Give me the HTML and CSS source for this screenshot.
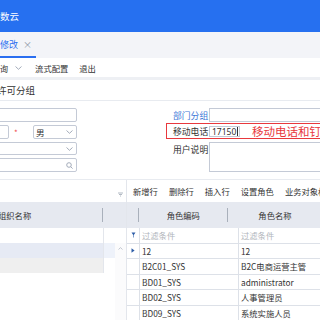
FILE: index.html
```html
<!DOCTYPE html>
<html lang="zh-CN">
  <head>
    <meta charset="utf-8">
    <title>用户修改</title>
    <link rel="stylesheet" href="styles.css">
  </head>
  <body>
    <div class="topbar"><span class="brand">数云</span></div>

    <div class="tabs">
      <div class="tab active">修改 <span class="close">×</span></div>
    </div>

    <div class="toolbar">
      <span class="tool first">查询</span>
      <svg class="chev" width="7" height="4" viewBox="0 0 7 4"><path d="M0.5 0.5 L3.5 3.3 L6.5 0.5" fill="none" stroke="#9aa3b2" stroke-width="0.9"/></svg>
      <span class="tool">流式配置</span>
      <span class="tool">退出</span>
    </div>

    <div class="section">许可分组</div>

    <div class="form">
      <div class="leftCol">
        <div class="field"></div>
        <div class="row2">
          <div class="field small"></div>
          <span class="req">*</span>
          <div class="field select">男
            <svg class="arrow" width="7" height="4" viewBox="0 0 7 4"><path d="M0.5 0.5 L3.5 3.3 L6.5 0.5" fill="none" stroke="#9aa3b2" stroke-width="0.9"/></svg>
          </div>
        </div>
        <div class="field select">
          <svg class="arrow" width="7" height="4" viewBox="0 0 7 4"><path d="M0.5 0.5 L3.5 3.3 L6.5 0.5" fill="none" stroke="#9aa3b2" stroke-width="0.9"/></svg>
        </div>
        <div class="field search">
          <svg class="arrow" width="7" height="7" viewBox="0 0 7 7"><circle cx="3" cy="3" r="2.3" fill="none" stroke="#9aa3b2" stroke-width="0.9"/><path d="M4.7 4.7 L6.6 6.6" stroke="#9aa3b2" stroke-width="0.9"/></svg>
        </div>
      </div>

      <div class="rightCol">
        <div class="frow">
          <span class="flabel link">部门分组</span>
          <div class="field grow"></div>
        </div>
        <div class="frow marked">
          <span class="flabel">移动电话</span>
          <div class="field phone">17150<span class="caret"></span></div>
          <span class="note">移动电话和钉钉手机号一致</span>
        </div>
        <div class="frow tall">
          <span class="flabel">用户说明</span>
          <div class="field grow area"></div>
        </div>
      </div>
    </div>

    <div class="panels">
      <div class="leftPanel">
        <div class="ptool">
          <svg width="5" height="5" viewBox="0 0 5 5"><path d="M0 1 H5 M1 2.5 H4 M2 4 H3" stroke="#a0a8b5" stroke-width="0.8"/></svg>
        </div>
        <div class="ghead">
          <span class="htext first">组织名称</span>
          <span class="sep"></span>
        </div>
        <div class="lbody">
          <div class="lrows">
            <div class="lrow"><span></span><span></span></div>
            <div class="lrow sel"><span></span><span></span></div>
            <div class="lrow grey"><span></span><span></span></div>
          </div>
          <div class="scroll">
            <svg width="5" height="3" viewBox="0 0 5 3"><path d="M0.5 2.5 L2.5 0.6 L4.5 2.5" fill="none" stroke="#b3b9c4" stroke-width="0.8"/></svg>
          </div>
        </div>
      </div>

      <div class="rightPanel">
        <div class="ptool btns">
          <span>新增行</span>
          <span>删除行</span>
          <span>插入行</span>
          <span>设置角色</span>
          <span>业务对象权限</span>
        </div>
        <div class="ghead">
          <span class="hcell ind"><span class="sep"></span></span>
          <span class="hcell code">角色编码<span class="sep"></span></span>
          <span class="hcell name">角色名称</span>
        </div>
        <div class="grid">
          <div class="gcell ind"><svg width="5" height="6" viewBox="0 0 5 6"><path d="M0.5 0.5 H4.5 L2.8 3 V5.5 L2.2 5.5 V3 Z" fill="#2e5ea8"/></svg></div>
          <div class="gcell hint">过滤条件</div>
          <div class="gcell hint">过滤条件</div>

          <div class="gcell ind"><svg width="4" height="5" viewBox="0 0 4 5"><path d="M0.5 0.3 L3.6 2.5 L0.5 4.7 Z" fill="#2e5ea8"/></svg></div>
          <div class="gcell">12</div>
          <div class="gcell">12</div>

          <div class="gcell ind"></div>
          <div class="gcell">B2C01_SYS</div>
          <div class="gcell">B2C电商运营主管</div>

          <div class="gcell ind"></div>
          <div class="gcell">BD01_SYS</div>
          <div class="gcell">administrator</div>

          <div class="gcell ind"></div>
          <div class="gcell">BD02_SYS</div>
          <div class="gcell">人事管理员</div>

          <div class="gcell ind"></div>
          <div class="gcell">BD09_SYS</div>
          <div class="gcell">系统实施人员</div>
        </div>
      </div>
    </div>
  </body>
</html>
```

FILE: styles.css
```css
body{
  margin: 0;
  width: 320px;
  height: 320px;
  overflow: hidden;
  font-family: "Noto Sans CJK SC", "Noto Sans", sans-serif;
  font-size: 9px;
  color: #333;
  background: #fff;
}

.topbar{
  height: 32px;
  background: #2670f0;
  color: #fff;
  display: flex;
  align-items: center;
  font-size: 9.5px;
}

.tabs{
  height: 26px;
  background: #f3f4f8;
  display: flex;
}
.tab{
  width: 36px;
  box-sizing: border-box;
  display: flex;
  align-items: center;
  gap: 5px;
  font-size: 9px;
  color: #2a6ef0;
  border-bottom: 2px solid #2a6ef0;
  padding-top: 1px;
}
.close{
  color: #8c95a5;
  font-size: 9px;
}

.toolbar{
  height: 19px;
  display: flex;
  align-items: center;
  font-size: 8.3px;
  border-bottom: 3px solid #eef0f4;
}
.tool.first{ margin-left: -8.5px; }
.chev{ margin: 0 13px 0 7px; }
.tool + .tool{ margin-left: 11px; }

.section{
  height: 20px;
  display: flex;
  align-items: center;
  margin-left: -3px;
  font-size: 9.5px;
  border-bottom: 1px solid #e8ebf0;
}

.form{
  display: flex;
  padding-top: 7px;
  height: 71px;
  box-sizing: border-box;
}
.leftCol{
  width: 77px;
  flex: none;
  display: flex;
  flex-direction: column;
  gap: 3px;
}
.field{
  height: 14px;
  box-sizing: border-box;
  border: 1px solid #c4cad6;
  border-radius: 2px;
  background: #fff;
  position: relative;
  display: flex;
  align-items: center;
}
.leftCol > .field{
  margin-left: -4px;
}
.row2{
  display: flex;
  align-items: center;
}
.field.small{
  width: 16px;
  flex: none;
  margin-left: -7px;
}
.req{
  color: #f04a4a;
  margin-left: 5px;
  width: 19px;
  flex: none;
  font-size: 8px;
}
.field.select{
  flex: 1;
  padding-left: 2px;
  font-size: 8.5px;
}
.arrow{
  margin-left: auto;
  margin-right: 3px;
}

.rightCol{
  margin-left: 89px;
  width: 154px;
  flex: none;
  display: flex;
  flex-direction: column;
}
.frow{
  display: flex;
  align-items: center;
  height: 14px;
  padding-left: 7px;
}
.flabel{
  width: 36px;
  flex: none;
  font-size: 8.8px;
}
.link{ color: #3c78d8; }
.field.grow{ flex: 1; border-radius: 0; border-right: none; }
.frow.marked{
  height: 16px;
  margin-top: 1px;
  border: 1px solid #e8383d;
  border-right: none;
  box-sizing: border-box;
  padding-left: 6px;
  overflow: hidden;
}
.field.phone{
  height: 11px;
  width: 31px;
  flex: none;
  padding-left: 2px;
  font-family: "Noto Sans", sans-serif;
  font-size: 8.5px;
  border-radius: 0;
}
.caret{
  width: 1px;
  height: 9px;
  background: #333;
  margin-left: 1px;
}
.note{
  color: #e8383d;
  font-size: 11.5px;
  margin-left: 12px;
  white-space: nowrap;
}
.frow.tall{
  margin-top: 3px;
  height: 30px;
  align-items: flex-start;
}
.frow.tall .flabel{ padding-top: 1px; }
.field.area{ height: 30px; }

.panels{
  margin-top: 7px;
  border-top: 1px solid #e8ebf0;
  display: flex;
  height: 141px;
}
.leftPanel{
  width: 126px;
  border-right: 1px solid #e3e6ec;
  flex: none;
}
.rightPanel{
  flex: 1;
  overflow: hidden;
}
.ptool{
  height: 22px;
  display: flex;
  align-items: center;
  justify-content: flex-end;
  padding-right: 3px;
  box-sizing: border-box;
}
.leftPanel .ptool{ align-items: flex-end; padding-bottom: 5px; }
.ptool.btns{
  justify-content: flex-start;
  padding-left: 6px;
  gap: 11px;
  font-size: 8.3px;
  white-space: nowrap;
}

.ghead{
  height: 26px;
  background: #e6e9f0;
  display: flex;
  align-items: center;
  font-size: 8.3px;
}
.htext.first{
  margin-left: -2px;
  width: 104px;
}
.sep{
  width: 1px;
  height: 14px;
  background: #a9b0bb;
}
.hcell{
  display: flex;
  align-items: center;
  justify-content: center;
  height: 100%;
  position: relative;
}
.hcell .sep{ position: absolute; right: 0; }
.hcell.ind{ width: 13px; }
.hcell.code{ width: 99px; }
.hcell.name{ width: 100px; padding-left: 2px; }

.lbody{
  display: flex;
}
.lrows{ width: 115px; }
.lrow{
  height: 15px;
  display: flex;
}
.lrow span:first-child{
  width: 103px;
  border-right: 1px solid #e3e6ec;
}
.lrow span:last-child{ flex: 1; }
.lrow.sel span:first-child{ background: #e6eaf4; }
.lrow.sel span:last-child{ background: #eef2fa; }
.lrow.grey span:first-child{ background: #efefef; }
.scroll{
  width: 11px;
  margin-top: 15px;
  height: 78px;
  background: #fbfbfc;
  display: flex;
  justify-content: center;
  padding-top: 4px;
  box-sizing: border-box;
}

.grid{
  display: grid;
  grid-template-columns: 13px 99px 100px;
  grid-auto-rows: 15.5px;
  font-size: 8.3px;
}
.gcell{
  border-right: 1px solid #dde1e8;
  border-bottom: 1px solid #dde1e8;
  display: flex;
  align-items: center;
  padding-left: 2px;
  white-space: nowrap;
  overflow: hidden;
}
.gcell.ind{
  justify-content: center;
  padding-left: 0;
}
.gcell.hint{ color: #b0b4bb; }
```
